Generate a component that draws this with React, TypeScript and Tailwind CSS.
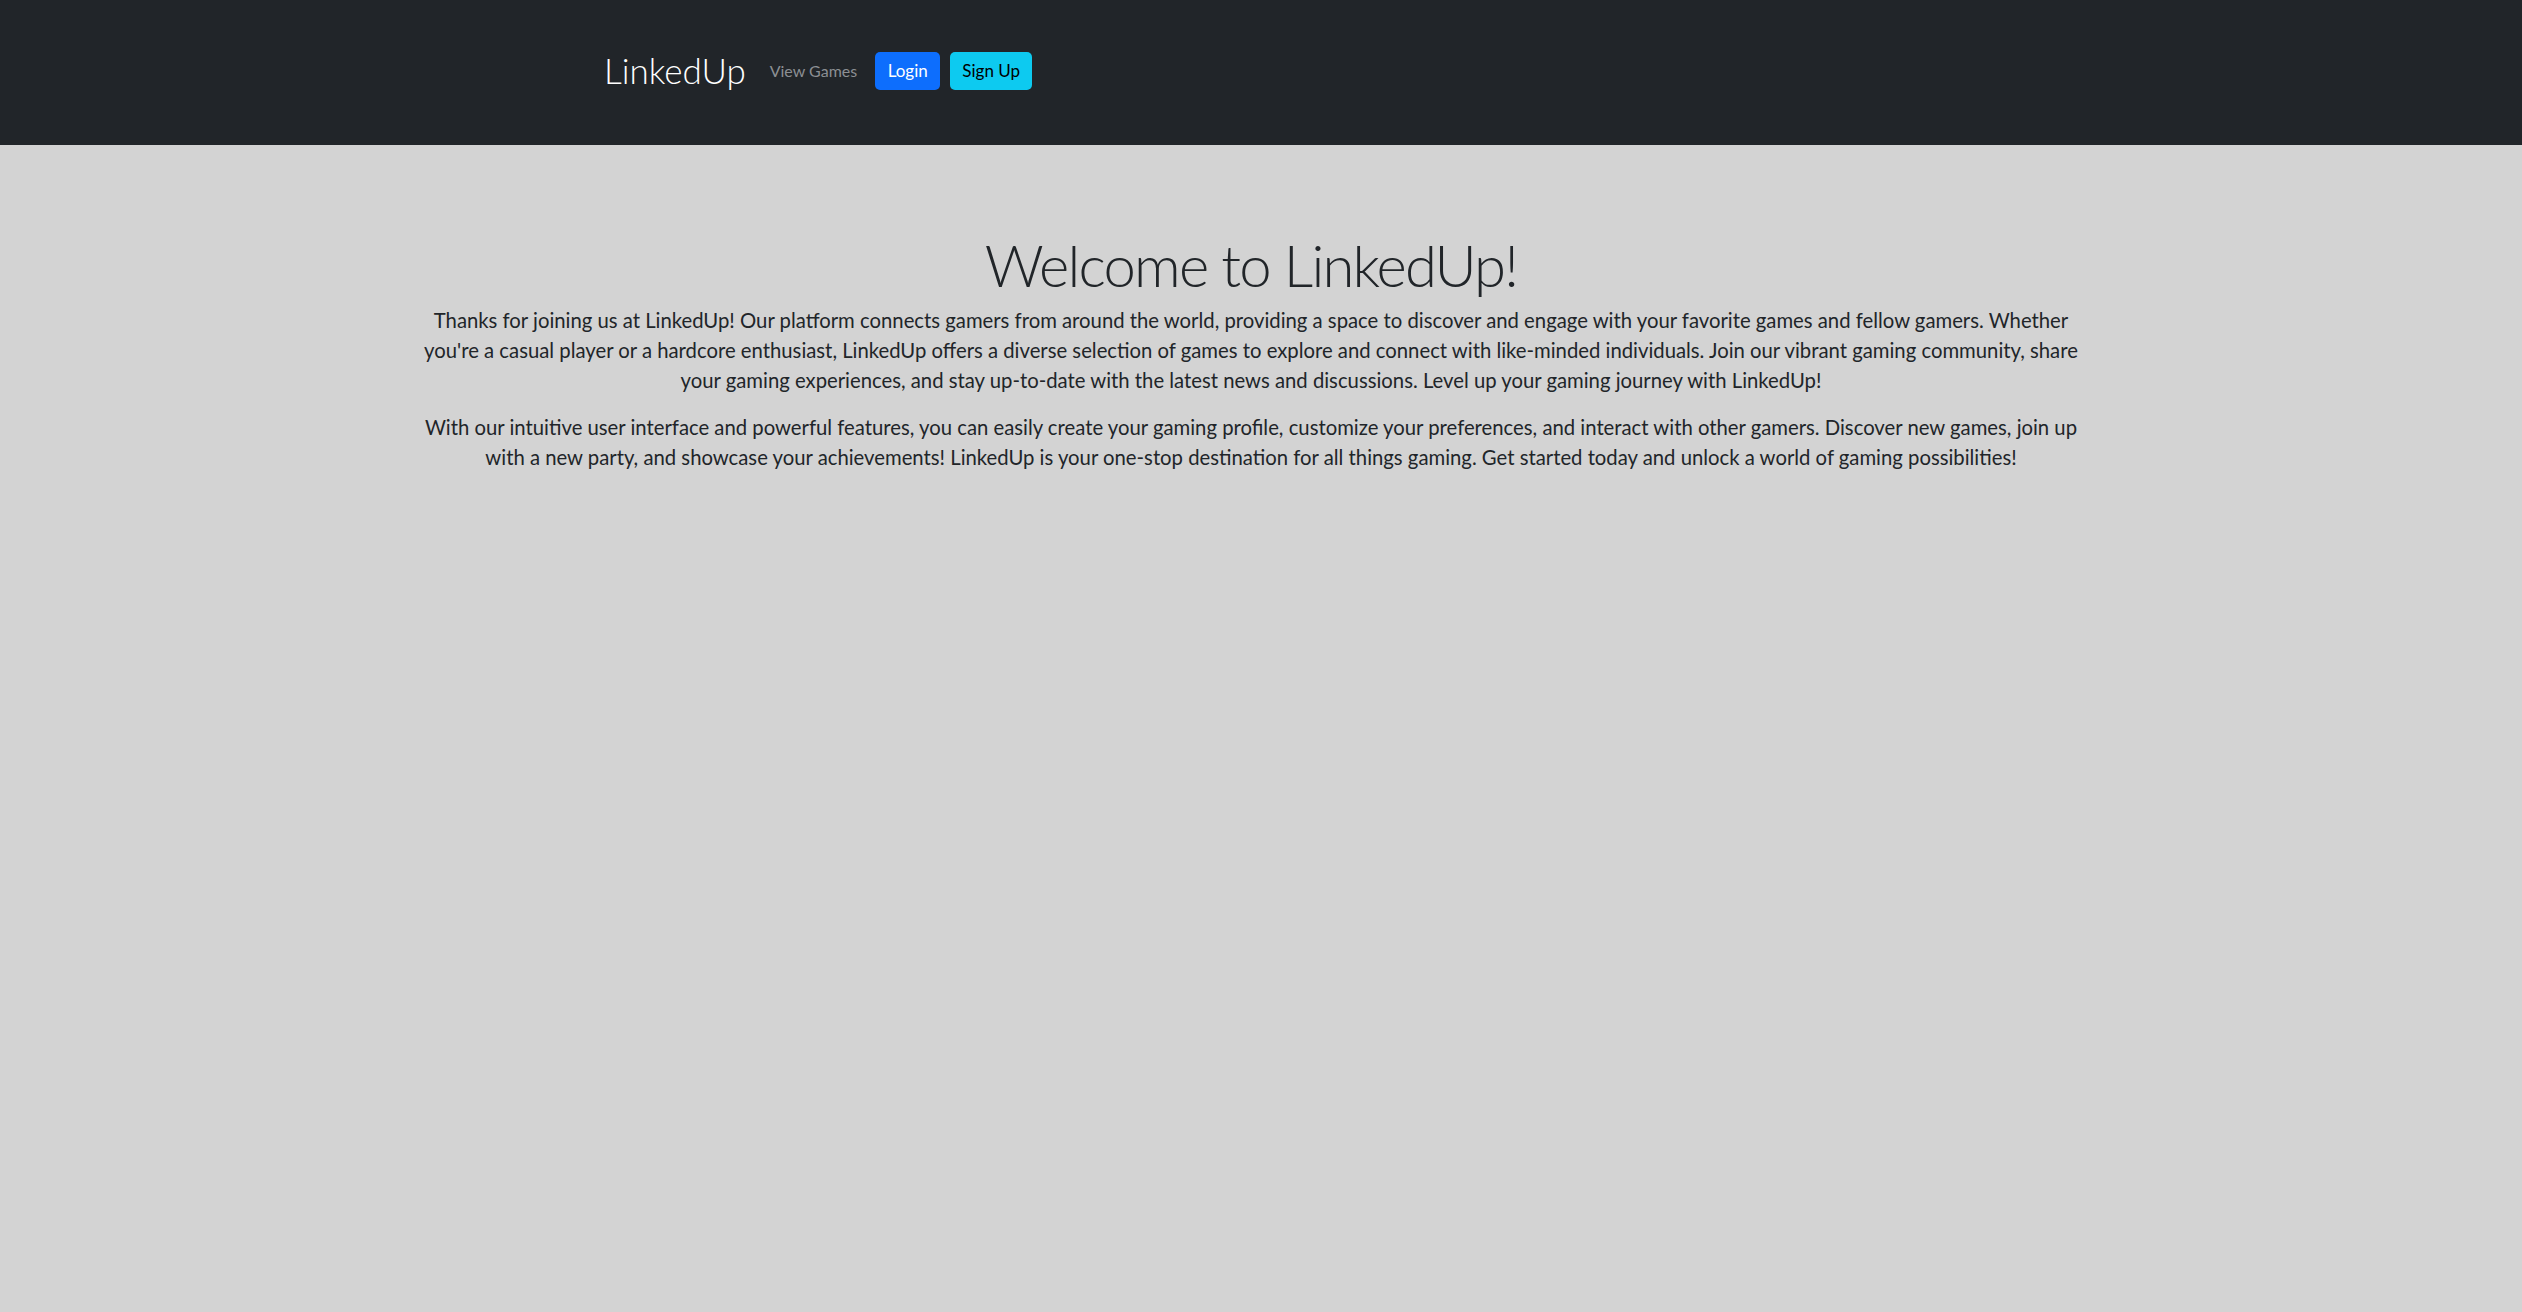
export default function App() {
  return (
    <div className="min-h-screen w-full bg-[#d3d3d3]" style={{ fontFamily: 'Lato, "Open Sans", sans-serif' }}>
      <nav className="h-[145px] w-full bg-[#212529] flex items-center pl-[604px] pb-[4px]">
        <span className="text-[35px] font-light text-white leading-none mr-[24px]">LinkedUp</span>
        <a className="text-[16px] text-[#8c8f93] mr-[18px]">View Games</a>
        <button className="h-[38px] w-[65px] rounded-[5px] bg-[#0d6efd] text-white text-[17px] mr-[10px]">Login</button>
        <button className="h-[38px] w-[82px] rounded-[5px] bg-[#0dcaf0] text-black text-[17px]">Sign Up</button>
      </nav>
      <main className="mx-auto w-[1680px] pt-[81px] text-center text-[#212529] -translate-x-[10px]">
        <h1 className="text-[58px] font-light leading-[77px] tracking-[-1.8px] mb-[2px]">Welcome to LinkedUp!</h1>
        <p className="text-[20.3px] leading-[30px] mb-[17px]">
          Thanks for joining us at LinkedUp! Our platform connects gamers from around the world, providing a space to discover and engage with your favorite games and fellow gamers. Whether you're a casual player or a hardcore enthusiast, LinkedUp offers a diverse selection of games to explore and connect with like-minded individuals. Join our vibrant gaming community, share your gaming experiences, and stay up-to-date with the latest news and discussions. Level up your gaming journey with LinkedUp!
        </p>
        <p className="text-[20.3px] leading-[30px]">
          With our intuitive user interface and powerful features, you can easily create your gaming profile, customize your preferences, and interact with other gamers. Discover new games, join up with a new party, and showcase your achievements! LinkedUp is your one-stop destination for all things gaming. Get started today and unlock a world of gaming possibilities!
        </p>
      </main>
    </div>
  );
}
